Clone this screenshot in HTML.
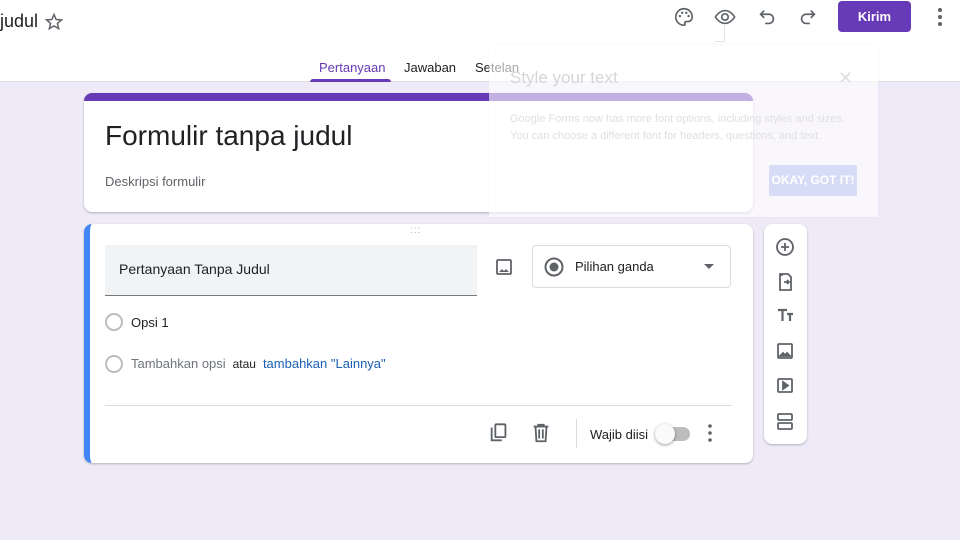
<!DOCTYPE html><html><head><style>
*{box-sizing:border-box;margin:0;padding:0}
body{width:960px;height:540px;overflow:hidden;background:#efeaf8;font-family:"Liberation Sans",sans-serif;position:relative}
.a{position:absolute}
.hdr{left:0;top:0;width:960px;height:82px;background:#fff;border-bottom:1px solid #e0e0e0}
.card{background:#fff;border-radius:8px;box-shadow:0 1px 2px rgba(0,0,0,.25)}
svg{position:absolute}
</style></head><body>
<div class="a hdr"></div>
<div class="a" style="left:0;top:11px;font-size:18px;color:#202124">judul</div>
<svg style="left:44px;top:12px" width="20" height="20" viewBox="0 0 24 24"><path d="M12 3l2.6 6 6.4.5-4.9 4.2 1.5 6.3L12 16.6 6.4 20l1.5-6.3L3 9.5l6.4-.5z" fill="none" stroke="#5f6368" stroke-width="1.8"/></svg>
<svg style="left:673px;top:6px" width="22" height="22" viewBox="0 0 24 24"><path d="M12 3a9 9 0 0 0 0 18c1.2 0 1.6-1 1-2-.6-1 .1-2 1.2-2H16a5 5 0 0 0 5-5c0-5-4-9-9-9z" fill="none" stroke="#5f6368" stroke-width="1.8"/><circle cx="7.5" cy="11" r="1.3" fill="#5f6368"/><circle cx="10" cy="7.5" r="1.3" fill="#5f6368"/><circle cx="14.5" cy="7.5" r="1.3" fill="#5f6368"/><circle cx="17" cy="11" r="1.3" fill="#5f6368"/></svg>
<svg style="left:714px;top:6px" width="22" height="22" viewBox="0 0 24 24"><path d="M1.5 12s4-7 10.5-7 10.5 7 10.5 7-4 7-10.5 7S1.5 12 1.5 12z" fill="none" stroke="#5f6368" stroke-width="1.8"/><circle cx="12" cy="12" r="3.5" fill="none" stroke="#5f6368" stroke-width="1.8"/></svg>
<svg style="left:756px;top:6px" width="22" height="22" viewBox="0 0 24 24"><path d="M9 5L5 9l4 4M5 9h9a5 5 0 0 1 0 10h-4" fill="none" stroke="#5f6368" stroke-width="1.8"/></svg>
<svg style="left:797px;top:6px" width="22" height="22" viewBox="0 0 24 24"><path d="M15 5l4 4-4 4M19 9h-9a5 5 0 0 0 0 10h4" fill="none" stroke="#5f6368" stroke-width="1.8"/></svg>
<div class="a" style="left:838px;top:1px;width:73px;height:31px;background:#673ab7;border-radius:4px;color:#fff;font-size:13px;font-weight:bold;text-align:center;line-height:31px">Kirim</div>
<svg style="left:930px;top:6px" width="20" height="22" viewBox="0 0 20 22"><circle cx="10" cy="4" r="2" fill="#5f6368"/><circle cx="10" cy="11" r="2" fill="#5f6368"/><circle cx="10" cy="18" r="2" fill="#5f6368"/></svg>
<div class="a" style="left:319px;top:60px;font-size:13px;color:#673ab7">Pertanyaan</div>
<div class="a" style="left:310px;top:79px;width:81px;height:3px;background:#673ab7;border-radius:3px 3px 0 0"></div>
<div class="a" style="left:404px;top:60px;font-size:13px;color:#202124">Jawaban</div>
<div class="a" style="left:475px;top:60px;font-size:13px;color:#202124">Setelan</div>
<div class="a card" style="left:84px;top:93px;width:669px;height:119px;border-top:8px solid #673ab7"></div>
<div class="a" style="left:105px;top:120px;font-size:28px;color:#202124">Formulir tanpa judul</div>
<div class="a" style="left:105px;top:174px;font-size:13px;color:#5f6368">Deskripsi formulir</div>
<div class="a card" style="left:84px;top:224px;width:669px;height:239px;border-left:6px solid #4285f4"></div>
<div class="a" style="left:410px;top:228px;font-size:10px;color:#aaa;letter-spacing:1px;line-height:5px">:::</div>
<div class="a" style="left:105px;top:245px;width:372px;height:51px;background:#f1f3f4;border-bottom:1px solid #777"></div>
<div class="a" style="left:119px;top:261px;font-size:14px;color:#202124">Pertanyaan Tanpa Judul</div>
<svg style="left:494px;top:257px" width="20" height="20" viewBox="0 0 20 20"><rect x="3" y="3" width="14" height="14" rx="1" fill="none" stroke="#5f6368" stroke-width="1.8"/><path d="M5 15l3-3 2 2 2-2 3 3z" fill="#5f6368"/></svg>
<div class="a" style="left:532px;top:245px;width:199px;height:43px;border:1px solid #dadce0;border-radius:4px"></div>
<svg style="left:543px;top:256px" width="22" height="22" viewBox="0 0 22 22"><circle cx="11" cy="11" r="8.5" fill="none" stroke="#5f6368" stroke-width="2"/><circle cx="11" cy="11" r="4.5" fill="#5f6368"/></svg>
<div class="a" style="left:575px;top:259px;font-size:13px;color:#202124">Pilihan ganda</div>
<div class="a" style="left:704px;top:264px;border:5px solid transparent;border-top:5px solid #5f6368"></div>
<div class="a" style="left:105px;top:313px;width:18px;height:18px;border:2px solid #bdbdbd;border-radius:50%"></div>
<div class="a" style="left:131px;top:315px;font-size:13px;color:#202124">Opsi 1</div>
<div class="a" style="left:105px;top:355px;width:18px;height:18px;border:2px solid #bdbdbd;border-radius:50%"></div>
<div class="a" style="left:131px;top:356px;font-size:13px;color:#70757a">Tambahkan opsi <span style="color:#202124;font-size:12px">&nbsp;atau&nbsp;</span> <span style="color:#1a5fb4">tambahkan "Lainnya"</span></div>
<div class="a" style="left:105px;top:405px;width:627px;height:1px;background:#dadce0"></div>
<svg style="left:488px;top:422px" width="22" height="22" viewBox="0 0 24 24"><path d="M4 6v14h11" fill="none" stroke="#5f6368" stroke-width="2"/><rect x="8" y="2.5" width="11" height="14" rx="1" fill="none" stroke="#5f6368" stroke-width="2"/></svg>
<svg style="left:530px;top:422px" width="22" height="22" viewBox="0 0 24 24"><path d="M4 5h16M9 5V3h6v2M6 5l1 16h10l1-16M10 8v10M14 8v10" fill="none" stroke="#5f6368" stroke-width="2"/></svg>
<div class="a" style="left:576px;top:419px;width:1px;height:29px;background:#dadce0"></div>
<div class="a" style="left:590px;top:427px;font-size:13px;color:#202124">Wajib diisi</div>
<div class="a" style="left:660px;top:427px;width:30px;height:14px;background:#bdbdbd;border-radius:7px"></div>
<div class="a" style="left:655px;top:424px;width:20px;height:20px;background:#fafafa;border-radius:50%;box-shadow:0 1px 3px rgba(0,0,0,.4)"></div>
<svg style="left:700px;top:422px" width="20" height="22" viewBox="0 0 20 22"><circle cx="10" cy="4" r="1.8" fill="#5f6368"/><circle cx="10" cy="11" r="1.8" fill="#5f6368"/><circle cx="10" cy="18" r="1.8" fill="#5f6368"/></svg>
<div class="a card" style="left:764px;top:224px;width:43px;height:220px"></div>
<svg style="left:775px;top:236px" width="20" height="200" viewBox="0 0 20 200" fill="none" stroke="#5f6368" stroke-width="1.8"><circle cx="10" cy="11" r="8"/><path d="M10 7v8M6 11h8"/><path d="M5 39h3M5 54V38h8l3 3v13zM9 46h5m-2-2l2 2-2 2"/><path d="M3 74h9M7.5 74v11M12 78h6M15 78v7" stroke-width="2.2"/><rect x="3" y="108" width="14" height="14" rx="1"/><path d="M5 120l3-3 2 2 2-2 3 3z" fill="#5f6368"/><rect x="3" y="143" width="14" height="13" rx="1"/><path d="M8 146v7l5-3.5z" fill="#5f6368"/><rect x="3" y="178" width="14" height="6" rx="1"/><rect x="3" y="187" width="14" height="6" rx="1"/></svg>
<div class="a" style="left:489px;top:45px;width:389px;height:172px;background:rgba(255,255,255,.6);box-shadow:0 0 4px rgba(0,0,0,.04)"></div>
<div class="a" style="left:724px;top:24px;width:1px;height:18px;background:#e6e6e6"></div>
<div class="a" style="left:715px;top:41px;width:10px;height:1px;background:#e6e6e6"></div>
<div class="a" style="left:510px;top:68px;font-size:17px;color:#d6d6d6">Style your text</div>
<div class="a" style="left:838px;top:68px;font-size:18px;color:#ddd">✕</div>
<div class="a" style="left:510px;top:111px;font-size:11px;color:#e0e0e0;line-height:17px">Google Forms now has more font options, including styles and sizes.<br>You can choose a different font for headers, questions, and text.</div>
<div class="a" style="left:769px;top:165px;width:88px;height:31px;background:#d7dcf6;color:#fff;font-size:12px;font-weight:bold;text-align:center;line-height:31px;border-radius:2px">OKAY, GOT IT!</div>
</body></html>
